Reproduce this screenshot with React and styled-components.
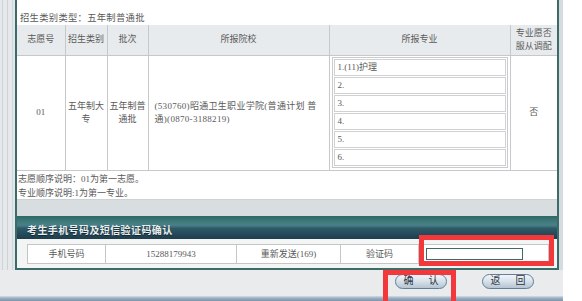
import React from "react";
import styled, { createGlobalStyle } from "styled-components";

const GlobalStyle = createGlobalStyle`
  html, body {
    margin: 0;
    padding: 0;
    background: #ffffff;
  }
  body {
    font-family: "Liberation Serif", "Noto Sans CJK SC", serif;
    font-size: 9px;
    color: #5a5a5a;
  }
`;

const Page = styled.div`
  position: relative;
  width: 563px;
  height: 301px;
  overflow: hidden;
  display: flex;
  flex-direction: column;
  background: #e9ebec;
`;

const Frame = styled.div`
  display: flex;
  background:
    linear-gradient(to right,
      #e6e9eb 0px, #e6e9eb 2px, #cfd4d7 2px, #cfd4d7 3px,
      #e6e9eb 3px, #e6e9eb 7px, #cdd2d5 7px, #cdd2d5 8px,
      #e6e9eb 8px, #e6e9eb 12px, #d0d5d8 12px, #d0d5d8 13px,
      #e3e6e8 13px);
`;

const LeftRail = styled.div`
  width: 15px;
  flex: none;
`;

const RightRail = styled.div`
  width: 4px;
  flex: none;
  background: #d6dbdd;
`;

const Panel = styled.div`
  width: 540px;
  flex: none;
  background: #ffffff;
  border-left: 2px solid #3b6c6a;
  border-right: 2px solid #3b6c6a;
  border-bottom: 2px solid #3b6c6a;
  display: flex;
  flex-direction: column;
`;

const TypeLine = styled.div`
  height: 25px;
  display: flex;
  align-items: center;
  padding: 8px 0 0 3px;
  box-sizing: border-box;
  font-size: 9.3px;
  letter-spacing: 0.3px;
`;

const MainTable = styled.table`
  width: 540px;
  border-collapse: collapse;
  table-layout: fixed;
  td, th {
    border: 1px solid #c6c8ca;
    font-weight: normal;
    text-align: center;
    vertical-align: middle;
    padding: 0 1px;
    line-height: 13px;
    color: #5a5a5a;
  }
  tr:first-child td, tr:first-child th { border-top: none; }
  td:first-child, th:first-child { border-left: none; }
  td:last-child, th:last-child { border-right: none; }
`;

const HeadRow = styled.tr`
  height: 30px;
  background: #e8ebed;
`;

const DataRow = styled.tr`
  height: 115px;
`;

const SchoolCell = styled.td`
  && {
    text-align: left;
    padding-left: 6px;
    padding-right: 0;
    white-space: nowrap;
    letter-spacing: 0.3px;
  }
`;

const MajorCell = styled.td`
  && {
    padding: 1px 2px;
  }
`;

const MajorList = styled.div`
  border: 1px solid #c9cbcd;
  padding: 1px;
  display: flex;
  flex-direction: column;
  gap: 1px;
`;

const MajorItem = styled.div`
  height: 17px;
  box-sizing: border-box;
  border: 1px solid #cfd1d3;
  text-align: left;
  padding-left: 3px;
  display: flex;
  align-items: center;
`;

const Notes = styled.div`
  height: 29px;
  box-sizing: border-box;
  padding: 1px 0 0 1px;
  line-height: 14px;
  border-bottom: 1px solid #cdd2d4;
`;

const GrayBand = styled.div`
  height: 16px;
  background: #d8dde0;
`;

const TealBar = styled.div`
  height: 23px;
  box-sizing: border-box;
  padding: 9px 0 0 10px;
  background: linear-gradient(to bottom, #2f6763 0%, #3f7b7e 25%, #4a8088 40%, #2c5866 55%, #1f3d4d 100%);
  color: #e9eef0;
  font-weight: bold;
  font-size: 10px;
  line-height: 12px;
  letter-spacing: 0.4px;
  text-shadow: 0 1px 1px rgba(0, 0, 0, 0.5);
`;

const ConfirmArea = styled.div`
  padding: 5px 9px 4px 10px;
  background: #f3f4f4;
`;

const SmsTable = styled.table`
  width: 521px;
  border-collapse: collapse;
  table-layout: fixed;
  background: #ffffff;
  td {
    height: 18px;
    border: 1px solid #c3c5c7;
    text-align: center;
    vertical-align: middle;
    padding: 0;
    color: #5a5a5a;
  }
`;

const CodeInput = styled.input`
  width: 97px;
  height: 12px;
  box-sizing: border-box;
  border: 1px solid #3e6a6a;
  padding: 0;
  margin-left: 7px;
  display: block;
  background: #ffffff;
`;

const ButtonBar = styled.div`
  height: 26px;
  display: flex;
  justify-content: flex-end;
  align-items: flex-start;
  gap: 35px;
  padding: 4px 29px 0 0;
  box-sizing: border-box;
`;

const PillButton = styled.button`
  flex: none;
  width: 52px;
  height: 15px;
  box-sizing: border-box;
  border-radius: 8px;
  border: 1px solid #5f7f9c;
  background: linear-gradient(to bottom, #f2f5f8 0%, #d7e0e9 50%, #b5c4d3 100%);
  font-family: "Liberation Serif", "Noto Sans CJK SC", serif;
  font-size: 10px;
  color: #2c3440;
  padding: 0;
  display: flex;
  align-items: center;
  justify-content: center;
  gap: 15px;
  line-height: 1;
`;

const BottomLine = styled.div`
  height: 5px;
  background: linear-gradient(to bottom, #d4dde6 0%, #9fb1c2 40%, #7d93a9 100%);
`;

const Highlight = styled.div`
  position: absolute;
  box-sizing: border-box;
  border: 5px solid #f2383a;
  left: ${(p) => p.x}px;
  top: ${(p) => p.y}px;
  width: ${(p) => p.w}px;
  height: ${(p) => p.h}px;
`;

const majors = ["1.(11)护理", "2.", "3.", "4.", "5.", "6."];

export default function App() {
  return (
    <Page>
      <GlobalStyle />
      <Frame>
        <LeftRail />
        <Panel>
          <TypeLine>招生类别类型：五年制普通批</TypeLine>
          <MainTable>
            <colgroup>
              <col style={{ width: 48 }} />
              <col style={{ width: 42 }} />
              <col style={{ width: 41 }} />
              <col style={{ width: 181 }} />
              <col style={{ width: 181 }} />
              <col style={{ width: 47 }} />
            </colgroup>
            <tbody>
              <HeadRow>
                <th>志愿号</th>
                <th>招生类别</th>
                <th>批次</th>
                <th>所报院校</th>
                <th>所报专业</th>
                <th>专业愿否服从调配</th>
              </HeadRow>
              <DataRow>
                <td>01</td>
                <td>五年制大专</td>
                <td>五年制普通批</td>
                <SchoolCell>
                  (530760)昭通卫生职业学院(普通计划 普
                  <br />
                  通)(0870-3188219)
                </SchoolCell>
                <MajorCell>
                  <MajorList>
                    {majors.map((m) => (
                      <MajorItem key={m}>{m}</MajorItem>
                    ))}
                  </MajorList>
                </MajorCell>
                <td>否</td>
              </DataRow>
            </tbody>
          </MainTable>
          <Notes>
            志愿顺序说明：01为第一志愿。
            <br />
            专业顺序说明:1为第一专业。
          </Notes>
          <GrayBand />
          <TealBar>考生手机号码及短信验证码确认</TealBar>
          <ConfirmArea>
            <SmsTable>
              <colgroup>
                <col style={{ width: 78 }} />
                <col style={{ width: 131 }} />
                <col style={{ width: 104 }} />
                <col style={{ width: 78 }} />
                <col style={{ width: 130 }} />
              </colgroup>
              <tbody>
                <tr>
                  <td>手机号码</td>
                  <td>15288179943</td>
                  <td>重新发送(169)</td>
                  <td>验证码</td>
                  <td>
                    <CodeInput type="text" />
                  </td>
                </tr>
              </tbody>
            </SmsTable>
          </ConfirmArea>
        </Panel>
        <RightRail />
      </Frame>
      <ButtonBar>
        <PillButton>
          <span>确</span>
          <span>认</span>
        </PillButton>
        <PillButton>
          <span>返</span>
          <span>回</span>
        </PillButton>
      </ButtonBar>
      <BottomLine />
      <Highlight x={419} y={235} w={135} h={31} />
      <Highlight x={383} y={270} w={73} h={36} />
    </Page>
  );
}
